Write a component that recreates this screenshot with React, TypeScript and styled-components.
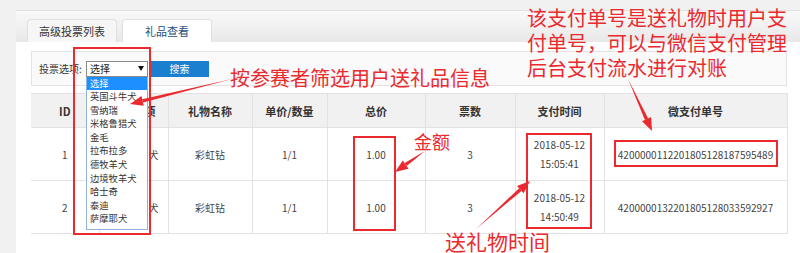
import styled, { createGlobalStyle } from "styled-components";

const GlobalStyle = createGlobalStyle`
  html, body {
    margin: 0;
    padding: 0;
    background: #f1f1f1;
    font-family: "Noto Sans CJK SC", "Open Sans", sans-serif;
    overflow: hidden;
  }
`;

const RED = "#ea2a2e";

const Page = styled.div`
  position: relative;
  width: 800px;
  height: 253px;
  padding: 10px 0 0 16px;
  box-sizing: border-box;
  overflow: hidden;
`;

const Panel = styled.div`
  background: #fff;
  height: 260px;
`;

const TabBar = styled.div`
  display: flex;
  align-items: flex-end;
  gap: 5px;
  height: 32px;
  padding-left: 11px;
  background: linear-gradient(#f9f9f9, #e8e8e8);
  border-top: 1px solid #e2e2e2;
  box-sizing: border-box;
`;

const Tab = styled.div<{ $active?: boolean }>`
  width: 90px;
  height: 23px;
  display: flex;
  align-items: center;
  justify-content: center;
  font-size: 11px;
  color: ${(p) => (p.$active ? "#24507a" : "#333")};
  background: ${(p) => (p.$active ? "#fff" : "#f6f6f6")};
  border: 1px solid #e0e0e0;
  border-bottom: none;
  border-radius: 4px 4px 0 0;
  box-sizing: border-box;
`;

const Content = styled.div`
  padding: 9px 13px 0 15px;
  display: flex;
  flex-direction: column;
  gap: 7px;
`;

const FilterBox = styled.div`
  height: 35px;
  border: 1px solid #e3e3e3;
  background: #fafafa;
  display: flex;
  align-items: center;
  padding-left: 7px;
  box-sizing: border-box;
  font-size: 10px;
  color: #333;
`;

const Label = styled.span`
  width: 47px;
  white-space: nowrap;
`;

const SelectWrap = styled.div`
  position: relative;
  width: 62px;
  height: 16px;
`;

const Select = styled.div`
  height: 16px;
  border: 1px solid #8a8a8a;
  background: #fff;
  box-sizing: border-box;
  display: flex;
  align-items: center;
  justify-content: space-between;
  padding: 0 3px;
  font-size: 10px;
  color: #222;
  line-height: 1;

  &::after {
    content: "";
    border-left: 3px solid transparent;
    border-right: 3px solid transparent;
    border-top: 5px solid #111;
  }
`;

const Options = styled.ul`
  position: absolute;
  top: 16px;
  left: 0;
  width: 62px;
  margin: 0;
  padding: 0 0 3px;
  list-style: none;
  background: #fff;
  border: 1px solid #8fb1dc;
  border-top: none;
  box-sizing: border-box;
  z-index: 2;
`;

const Option = styled.li<{ $selected?: boolean }>`
  height: 13.6px;
  line-height: 13.6px;
  font-size: 9.3px;
  padding-left: 3px;
  white-space: nowrap;
  color: ${(p) => (p.$selected ? "#fff" : "#333")};
  background: ${(p) => (p.$selected ? "#1e8fff" : "transparent")};
`;

const SearchButton = styled.button`
  margin-left: 2px;
  width: 59px;
  height: 16px;
  border: none;
  padding: 0;
  background: #1b7fd0;
  color: #fff;
  font-family: inherit;
  font-size: 10px;
  line-height: 16px;
`;

const Table = styled.table`
  width: 756px;
  border-collapse: collapse;
  table-layout: fixed;
  font-size: 10px;
  color: #444;

  th,
  td {
    border: 1px solid #e2e2e2;
    text-align: center;
    padding: 0;
  }

  th {
    height: 33px;
    background: #f1f1f1;
    font-size: 11px;
    font-weight: bold;
    color: #333;
  }

  td {
    height: 52px;
    line-height: 19px;
  }

  th:first-child,
  td:first-child {
    border-left: none;
  }
`;

const Pager = styled.div`
  display: flex;
  gap: 5px;
  margin-top: 12px;
  padding-left: 355px;
`;

const PageBox = styled.div<{ $w: number }>`
  width: ${(p) => p.$w}px;
  height: 20px;
  border: 1px solid #cfcfcf;
  background: #fff;
  box-sizing: border-box;
`;

const Mark = styled.div<{ $x: number; $y: number; $w: number; $h: number }>`
  position: absolute;
  left: ${(p) => p.$x}px;
  top: ${(p) => p.$y}px;
  width: ${(p) => p.$w}px;
  height: ${(p) => p.$h}px;
  border: 2px solid ${RED};
  box-sizing: border-box;
  z-index: 3;
`;

const Note = styled.div<{ $x: number; $y: number; $size: number }>`
  position: absolute;
  left: ${(p) => p.$x}px;
  top: ${(p) => p.$y}px;
  font-size: ${(p) => p.$size}px;
  line-height: 25px;
  color: ${RED};
  white-space: nowrap;
  z-index: 3;
`;

const Arrows = styled.svg`
  position: absolute;
  left: 0;
  top: 0;
  z-index: 4;
  pointer-events: none;
`;

const options = [
  "选择",
  "英国斗牛犬",
  "雪纳瑞",
  "米格鲁猎犬",
  "金毛",
  "拉布拉多",
  "德牧羊犬",
  "边境牧羊犬",
  "哈士奇",
  "泰迪",
  "萨摩耶犬",
];

const rows = [
  { id: 1, who: "英国斗牛犬", gift: "彩虹钻", unit: "1/1", total: "1.00", votes: 3, date: "2018-05-12", time: "15:05:41", order: "4200000112201805128187595489" },
  { id: 2, who: "英国斗牛犬", gift: "彩虹钻", unit: "1/1", total: "1.00", votes: 3, date: "2018-05-12", time: "14:50:49", order: "4200000132201805128033592927" },
];

const cols = [68, 69, 84, 75, 98, 90, 89, 183];

function Arrow({ x1, y1, x2, y2 }: { x1: number; y1: number; x2: number; y2: number }) {
  const a = Math.atan2(y2 - y1, x2 - x1);
  const len = 13;
  const wid = 5;
  const bx = x2 - len * Math.cos(a);
  const by = y2 - len * Math.sin(a);
  const px = -Math.sin(a) * wid;
  const py = Math.cos(a) * wid;
  return (
    <g>
      <polygon
        points={`${x1},${y1} ${bx + px * 0.35},${by + py * 0.35} ${bx - px * 0.35},${by - py * 0.35}`}
        fill={RED}
      />
      <polygon points={`${x2},${y2} ${bx + px},${by + py} ${bx - px},${by - py}`} fill={RED} />
    </g>
  );
}

export default function App() {
  return (
    <>
      <GlobalStyle />
      <Page>
        <Panel>
          <TabBar>
            <Tab>高级投票列表</Tab>
            <Tab $active>礼品查看</Tab>
          </TabBar>
          <Content>
            <FilterBox>
              <Label>投票选项:</Label>
              <SelectWrap>
                <Select>选择</Select>
                <Options>
                  {options.map((o, i) => (
                    <Option key={o} $selected={i === 0}>
                      {o}
                    </Option>
                  ))}
                </Options>
              </SelectWrap>
              <SearchButton>搜索</SearchButton>
            </FilterBox>
            <Table>
              <colgroup>
                {cols.map((w, i) => (
                  <col key={i} style={{ width: w }} />
                ))}
              </colgroup>
              <thead>
                <tr>
                  <th>ID</th>
                  <th>投票选项</th>
                  <th>礼物名称</th>
                  <th>单价/数量</th>
                  <th>总价</th>
                  <th>票数</th>
                  <th>支付时间</th>
                  <th>微支付单号</th>
                </tr>
              </thead>
              <tbody>
                {rows.map((r) => (
                  <tr key={r.id}>
                    <td>{r.id}</td>
                    <td>{r.who}</td>
                    <td>{r.gift}</td>
                    <td>{r.unit}</td>
                    <td>{r.total}</td>
                    <td>{r.votes}</td>
                    <td>
                      {r.date}
                      <br />
                      {r.time}
                    </td>
                    <td>{r.order}</td>
                  </tr>
                ))}
              </tbody>
            </Table>
            <Pager>
              <PageBox $w={27} />
              <PageBox $w={18} />
              <PageBox $w={29} />
            </Pager>
          </Content>
        </Panel>

        <Mark $x={73} $y={47} $w={78} $h={188} />
        <Mark $x={353} $y={136} $w={43} $h={95} />
        <Mark $x={526} $y={133} $w={66} $h={96} />
        <Mark $x={614} $y={140} $w={164} $h={27} />

        <Note $x={230} $y={65} $size={20}>按参赛者筛选用户送礼品信息</Note>
        <Note $x={414} $y={129} $size={18}>金额</Note>
        <Note $x={445} $y={229} $size={21}>送礼物时间</Note>
        <Note $x={527} $y={5} $size={20}>
          该支付单号是送礼物时用户支
          <br />
          付单号，可以与微信支付管理
          <br />
          后台支付流水进行对账
        </Note>

        <Arrows width={800} height={253}>
          <Arrow x1={232} y1={79} x2={130} y2={104} />
          <Arrow x1={425} y1={151} x2={395} y2={172} />
          <Arrow x1={476} y1={229} x2={530} y2={181} />
          <Arrow x1={628} y1={79} x2={652} y2={131} />
        </Arrows>
      </Page>
    </>
  );
}
